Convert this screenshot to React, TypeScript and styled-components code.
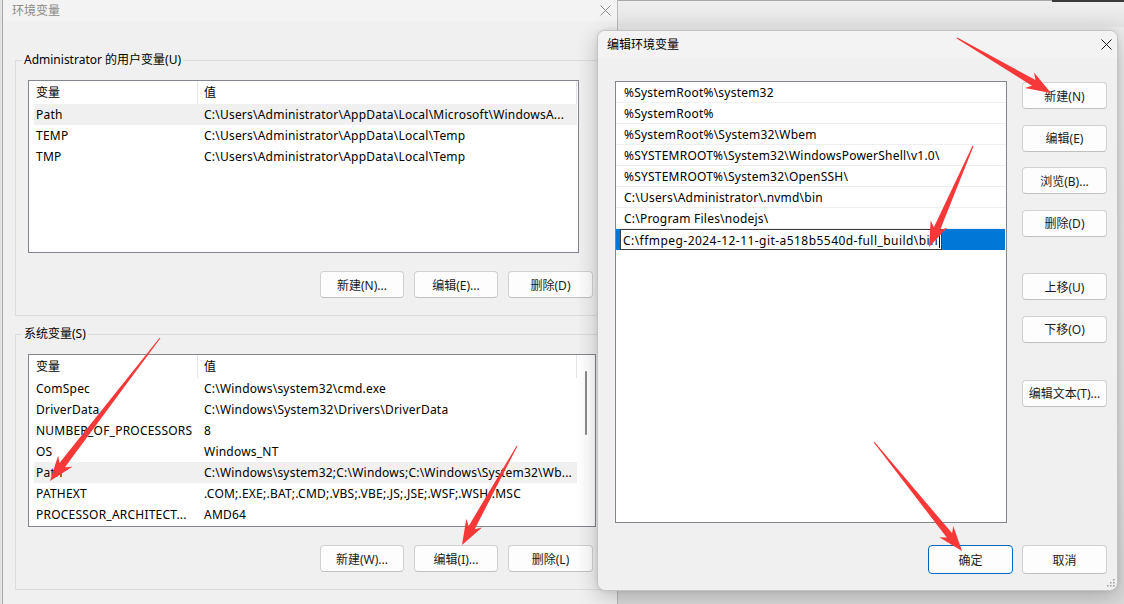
import React from "react";
import styled, { createGlobalStyle } from "styled-components";

const FONT = `"Noto Sans", "Noto Sans CJK SC", sans-serif`;

const userVars = [
  ["Path", "C:\\Users\\Administrator\\AppData\\Local\\Microsoft\\WindowsA..."],
  ["TEMP", "C:\\Users\\Administrator\\AppData\\Local\\Temp"],
  ["TMP", "C:\\Users\\Administrator\\AppData\\Local\\Temp"],
];

const sysVars = [
  ["ComSpec", "C:\\Windows\\system32\\cmd.exe"],
  ["DriverData", "C:\\Windows\\System32\\Drivers\\DriverData"],
  ["NUMBER_OF_PROCESSORS", "8"],
  ["OS", "Windows_NT"],
  ["Path", "C:\\Windows\\system32;C:\\Windows;C:\\Windows\\System32\\Wb..."],
  ["PATHEXT", ".COM;.EXE;.BAT;.CMD;.VBS;.VBE;.JS;.JSE;.WSF;.WSH;.MSC"],
  ["PROCESSOR_ARCHITECT...", "AMD64"],
];

const pathItems = [
  "%SystemRoot%\\system32",
  "%SystemRoot%",
  "%SystemRoot%\\System32\\Wbem",
  "%SYSTEMROOT%\\System32\\WindowsPowerShell\\v1.0\\",
  "%SYSTEMROOT%\\System32\\OpenSSH\\",
  "C:\\Users\\Administrator\\.nvmd\\bin",
  "C:\\Program Files\\nodejs\\",
];

const editing = "C:\\ffmpeg-2024-12-11-git-a518b5540d-full_build\\bin";

// tail -> tip
const arrows = [
  [957, 38, 1051, 93],
  [973, 146, 929, 247],
  [160, 338, 50, 481],
  [517, 446, 462, 545],
  [874, 442, 962, 551],
];

function arrowPoints(x1: number, y1: number, x2: number, y2: number) {
  const dx = x2 - x1;
  const dy = y2 - y1;
  const len = Math.hypot(dx, dy);
  const ux = dx / len;
  const uy = dy / len;
  const nx = -uy;
  const ny = ux;
  const headLen = 25;
  const headW = 9;
  const shaftW = 3.4;
  const tailW = 0.5;
  const sx = x2 - ux * (headLen - 5);
  const sy = y2 - uy * (headLen - 5);
  const bx = x2 - ux * headLen;
  const by = y2 - uy * headLen;
  const pts = [
    [x1 + nx * tailW, y1 + ny * tailW],
    [sx + nx * shaftW, sy + ny * shaftW],
    [bx + nx * headW, by + ny * headW],
    [x2, y2],
    [bx - nx * headW, by - ny * headW],
    [sx - nx * shaftW, sy - ny * shaftW],
    [x1 - nx * tailW, y1 - ny * tailW],
  ];
  return pts.map((p) => `${p[0].toFixed(1)},${p[1].toFixed(1)}`).join(" ");
}

function CloseIcon({ color }: { color: string }) {
  return (
    <svg width="11" height="11" viewBox="0 0 11 11">
      <path d="M0.5 0.5 L10.5 10.5 M10.5 0.5 L0.5 10.5" stroke={color} strokeWidth="1" fill="none" />
    </svg>
  );
}

function App() {
  return (
    <Desktop>
      <GlobalStyle />
      <BackWindow />

      <EnvWindow>
        <TitleBar $h={21} $pl={9} $bg="#f3f3f3">
          <Title $muted>环境变量</Title>
          <CloseBtn $w={24}>
            <CloseIcon color="#8c8c8c" />
          </CloseBtn>
        </TitleBar>
        <EnvBody>
          <Group>
            <Legend>Administrator 的用户变量(U)</Legend>
            <ListBox $w={551}>
              <HeaderRow>
                <HeadCell>变量</HeadCell>
                <HeadCell $last>值</HeadCell>
              </HeaderRow>
              {userVars.map(([k, v], i) => (
                <VarRow key={k + i} $hot={i === 0}>
                  <NameCell>{k}</NameCell>
                  <ValueCell>{v}</ValueCell>
                </VarRow>
              ))}
            </ListBox>
            <ButtonRow>
              <Btn $w={84}>新建(N)...</Btn>
              <Btn $w={84}>编辑(E)...</Btn>
              <Btn $w={85}>删除(D)</Btn>
            </ButtonRow>
          </Group>

          <Group $gap={10}>
            <Legend>系统变量(S)</Legend>
            <ListBox $w={568}>
              <HeaderRow>
                <HeadCell>变量</HeadCell>
                <HeadCell $last>值</HeadCell>
              </HeaderRow>
              {sysVars.map(([k, v], i) => (
                <VarRow key={k + i} $hot={k === "Path"}>
                  <NameCell>{k}</NameCell>
                  <ValueCell>{v}</ValueCell>
                </VarRow>
              ))}
              <ScrollThumb />
            </ListBox>
            <ButtonRow>
              <Btn $w={84}>新建(W)...</Btn>
              <Btn $w={84}>编辑(I)...</Btn>
              <Btn $w={85}>删除(L)</Btn>
            </ButtonRow>
          </Group>
        </EnvBody>
      </EnvWindow>

      <EditDialog>
        <TitleBar $h={27} $pl={9} $bg="#f3f3f3">
          <Title>编辑环境变量</Title>
          <CloseBtn $w={22} $mr={0}>
            <CloseIcon color="#1a1a1a" />
          </CloseBtn>
        </TitleBar>
        <DialogBody>
          <DialogMain>
            <PathList>
              {pathItems.map((p) => (
                <PathRow key={p}>{p}</PathRow>
              ))}
              <EditRow>
                <EditBox>
                  {editing}
                  <Caret />
                </EditBox>
              </EditRow>
            </PathList>
            <SideButtons>
              <Btn>新建(N)</Btn>
              <Btn>编辑(E)</Btn>
              <Btn>浏览(B)...</Btn>
              <Btn>删除(D)</Btn>
              <Btn $space={21}>上移(U)</Btn>
              <Btn>下移(O)</Btn>
              <Btn $space={21}>编辑文本(T)...</Btn>
            </SideButtons>
          </DialogMain>
          <Footer>
            <Btn $h={29} $primary>
              确定
            </Btn>
            <Btn $h={29}>取消</Btn>
          </Footer>
        </DialogBody>
        <Grip width="9" height="9" viewBox="0 0 9 9">
          {[
            [7, 1],
            [4, 4],
            [7, 4],
            [1, 7],
            [4, 7],
            [7, 7],
          ].map(([x, y]) => (
            <rect key={`${x}-${y}`} x={x} y={y} width="1.5" height="1.5" fill="#9a9a9a" />
          ))}
        </Grip>
      </EditDialog>

      <ArrowLayer width="1124" height="604" viewBox="0 0 1124 604">
        {arrows.map(([a, b, c, d], i) => (
          <polygon key={i} points={arrowPoints(a, b, c, d)} fill="#f63838" />
        ))}
      </ArrowLayer>
    </Desktop>
  );
}

export default App;

const GlobalStyle = createGlobalStyle`
  html, body {
    margin: 0;
    padding: 0;
    background: #e2e2e2;
  }
  body {
    font-family: ${FONT};
    font-size: 12px;
    color: #000;
  }
`;

const Desktop = styled.div`
  position: relative;
  width: 1124px;
  height: 604px;
  overflow: hidden;
  background: #e2e2e2;
  font-family: ${FONT};
  font-size: 12px;
  color: #000;
`;

const BackWindow = styled.div`
  position: absolute;
  left: 616px;
  top: 0;
  right: 0;
  bottom: 0;
  border-top: 1px solid #a9a9a9;
  background: linear-gradient(
    #efefef 0,
    #e3e3e3 25px,
    #ececec 27px,
    #e6e6e6 70%,
    #dadada 100%
  );

  &::after {
    content: "";
    position: absolute;
    right: 0;
    top: -1px;
    width: 72px;
    height: 2px;
    background: #3a3a3a;
  }
`;

const EnvWindow = styled.section`
  position: absolute;
  left: 2px;
  top: 0;
  width: 616px;
  height: 620px;
  box-sizing: border-box;
  border-left: 1px solid #a9a9a9;
  border-right: 1px solid #b9b9b9;
  background: #f0f0f0;
  display: flex;
  flex-direction: column;
`;

const TitleBar = styled.header<{ $h: number; $pl: number; $bg: string }>`
  flex: none;
  height: ${(p) => p.$h}px;
  padding-left: ${(p) => p.$pl}px;
  background: ${(p) => p.$bg};
  display: flex;
  align-items: center;
  justify-content: space-between;
`;

const Title = styled.span<{ $muted?: boolean }>`
  font-size: 12px;
  line-height: 14px;
  color: ${(p) => (p.$muted ? "#8a8a8a" : "#000")};
`;

const CloseBtn = styled.span<{ $w: number; $mr?: number }>`
  width: ${(p) => p.$w}px;
  height: 100%;
  margin-right: ${(p) => p.$mr ?? 0}px;
  display: flex;
  align-items: center;
  justify-content: center;
`;

const EnvBody = styled.div`
  padding: 31px 14px 0 12px;
  display: flex;
  flex-direction: column;
`;

const Group = styled.fieldset<{ $gap?: number }>`
  margin: ${(p) => p.$gap ?? 0}px 0 0 0;
  padding: 12px 6px 17px 12px;
  min-width: 0;
  border: 1px solid #dcdcdc;
`;

const Legend = styled.legend`
  margin-left: -6px;
  padding: 0 2px;
  font-size: 12px;
  line-height: 16px;
  color: #000;
`;

const ListBox = styled.div<{ $w: number }>`
  position: relative;
  width: ${(p) => p.$w}px;
  height: 173px;
  box-sizing: border-box;
  border: 1px solid #82878f;
  background: #fff;
  overflow: hidden;
`;

const HeaderRow = styled.div`
  display: grid;
  grid-template-columns: 169px 379px;
  height: 23px;
`;

const HeadCell = styled.div<{ $last?: boolean }>`
  padding-left: ${(p) => (p.$last ? 6 : 7)}px;
  line-height: 23px;
  border-right: 1px solid #e5e5e5;
  white-space: nowrap;
`;

const VarRow = styled.div<{ $hot?: boolean }>`
  display: grid;
  grid-template-columns: 165px 1fr;
  height: 21px;
  line-height: 22px;
  margin: 0 0 0 5px;
  width: 543px;
  letter-spacing: 0.22px;
  background: ${(p) => (p.$hot ? "#f0f0f0" : "transparent")};
`;

const NameCell = styled.div`
  padding-left: 2px;
  white-space: nowrap;
  overflow: hidden;
`;

const ValueCell = styled.div`
  padding-left: 5px;
  white-space: nowrap;
  overflow: hidden;
`;

const ScrollThumb = styled.div`
  position: absolute;
  right: 8px;
  top: 16px;
  width: 2px;
  height: 64px;
  border-radius: 1px;
  background: #8a8a8a;
`;

const ButtonRow = styled.div`
  display: flex;
  justify-content: flex-end;
  gap: 10px;
  margin-top: 18px;
  padding-right: 3px;
`;

const Btn = styled.button<{ $w?: number; $h?: number; $primary?: boolean; $space?: number }>`
  flex: none;
  width: ${(p) => p.$w ?? 85}px;
  height: ${(p) => p.$h ?? 27}px;
  margin-top: ${(p) => p.$space ?? 0}px;
  box-sizing: border-box;
  padding: 0;
  border: 1px solid ${(p) => (p.$primary ? "#0067c0" : "#d1d1d1")};
  border-bottom-color: ${(p) => (p.$primary ? "#0067c0" : "#c0c0c0")};
  border-radius: 4px;
  background: #fdfdfd;
  font-family: ${FONT};
  font-size: 12px;
  color: #1b1b1b;
  white-space: nowrap;
`;

const EditDialog = styled.section`
  position: absolute;
  left: 597px;
  top: 30px;
  width: 521px;
  height: 561px;
  box-sizing: border-box;
  border: 1px solid #c4c4c4;
  border-radius: 8px;
  background: #f0f0f0;
  overflow: hidden;
  display: flex;
  flex-direction: column;
  box-shadow: 0 6px 22px rgba(0, 0, 0, 0.22), 0 0 4px rgba(0, 0, 0, 0.08);
  z-index: 2;
`;

const DialogBody = styled.div`
  flex: 1;
  padding: 23px 10px 15px 17px;
  display: flex;
  flex-direction: column;
`;

const DialogMain = styled.div`
  display: flex;
  gap: 15px;
`;

const PathList = styled.div`
  width: 392px;
  height: 442px;
  box-sizing: border-box;
  border: 1px solid #82878f;
  background: #fff;
  overflow: hidden;
`;

const PathRow = styled.div`
  height: 21px;
  box-sizing: border-box;
  border-bottom: 1px solid #efefef;
  padding-left: 8px;
  line-height: 22px;
  letter-spacing: 0.22px;
  white-space: nowrap;
  overflow: hidden;
`;

const EditRow = styled.div`
  height: 21px;
  margin-right: 1px;
  background: #0078d7;
  display: flex;
  padding-left: 4px;
`;

const EditBox = styled.div`
  height: 21px;
  box-sizing: border-box;
  border: 1px solid #3d3d3d;
  background: #fff;
  padding: 1px 1px 0 2px;
  line-height: 19px;
  letter-spacing: 0.45px;
  white-space: nowrap;
  display: flex;
  align-items: center;
`;

const Caret = styled.span`
  width: 1px;
  height: 15px;
  background: #000;
  margin-left: 1px;
`;

const SideButtons = styled.div`
  display: flex;
  flex-direction: column;
  gap: 15.6px;
  padding-top: 1px;
`;

const Footer = styled.div`
  display: flex;
  justify-content: flex-end;
  gap: 9px;
  margin-top: 22px;
`;

const Grip = styled.svg`
  position: absolute;
  right: 2px;
  bottom: 3px;
`;

const ArrowLayer = styled.svg`
  position: absolute;
  left: 0;
  top: 0;
  z-index: 5;
  pointer-events: none;
`;
